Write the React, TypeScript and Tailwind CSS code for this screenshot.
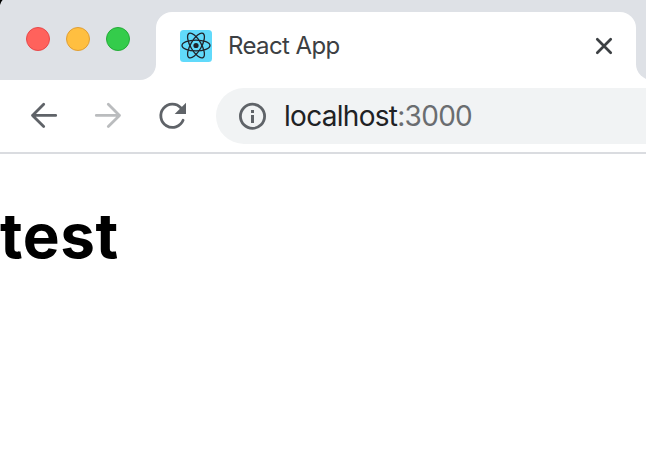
import React from "react";

function TrafficLights() {
  return (
    <div className="flex gap-4 pl-[26px] pt-[27px]">
      <span className="size-6 rounded-full border border-[#e8484a] bg-[#ff625c]" />
      <span className="size-6 rounded-full border border-[#e09e34] bg-[#ffbf40]" />
      <span className="size-6 rounded-full border border-[#24ab38] bg-[#34cc4b]" />
    </div>
  );
}

function ReactLogo() {
  return (
    <svg className="size-8 shrink-0" viewBox="0 0 32 32" fill="none" stroke="#20232a" strokeWidth="1.3">
      <rect width="32" height="32" rx="3.5" fill="#61dafb" stroke="none" />
      <circle cx="16" cy="15.5" r="2.6" fill="#20232a" stroke="none" />
      <ellipse cx="16" cy="15.5" rx="14" ry="5.4" />
      <ellipse cx="16" cy="15.5" rx="14" ry="5.4" transform="rotate(60 16 15.5)" />
      <ellipse cx="16" cy="15.5" rx="14" ry="5.4" transform="rotate(120 16 15.5)" />
    </svg>
  );
}

function TabStrip() {
  return (
    <header className="flex h-20 overflow-hidden bg-white">
      <div className="w-[156px] shrink-0 rounded-br-2xl bg-[#dee1e6]">
        <TrafficLights />
      </div>
      <div className="w-[480px] shrink-0 bg-[#dee1e6] pt-3">
        <div className="flex h-[68px] items-center rounded-t-2xl bg-white pl-6 pr-[23px]">
          <ReactLogo />
          <span className="ml-4 flex-1 whitespace-nowrap text-2xl tracking-[-0.6px] text-[#3c4043]">React App</span>
          <svg className="size-[18px]" viewBox="0 0 18 18" stroke="#3c4043" strokeWidth="2.7" strokeLinecap="round">
            <path d="M2.3 2.3 15.7 15.7M15.7 2.3 2.3 15.7" />
          </svg>
        </div>
      </div>
      <div className="w-10 shrink-0 rounded-bl-2xl bg-[#dee1e6]" />
    </header>
  );
}

function Toolbar() {
  return (
    <div className="flex h-[74px] items-start overflow-hidden border-b-2 border-[#dadce0] bg-white pt-2">
      <svg className="ml-[30px] mt-[14px] h-7 w-7 shrink-0" viewBox="0 0 28 28" fill="none" stroke="#5f6368" strokeWidth="2.8" strokeLinecap="round" strokeLinejoin="round">
        <path d="M25.7 13.4H2.5M13.7 2.2 2.5 13.4l11.2 11.2" />
      </svg>
      <svg className="ml-9 mt-[14px] h-7 w-7 shrink-0" viewBox="0 0 28 28" fill="none" stroke="#babcbe" strokeWidth="2.8" strokeLinecap="round" strokeLinejoin="round">
        <path d="M2.3 13.4h23.2M14.3 2.2l11.2 11.2-11.2 11.2" />
      </svg>
      <svg className="ml-9 mt-[14px] h-7 w-7 shrink-0" viewBox="0 0 28 28" fill="none">
        <path d="M23 6A11.6 11.6 0 1 0 25.1 18.3" stroke="#5f6368" strokeWidth="2.8" strokeLinecap="round" />
        <path d="M28 .8v11.3H16.7Z" fill="#5f6368" />
      </svg>
      <div className="ml-[30px] flex h-14 w-[500px] shrink-0 items-center rounded-l-full bg-[#f1f3f4] pl-[22px]">
        <svg className="size-7" viewBox="0 0 28 28" fill="none">
          <circle cx="14.5" cy="14.3" r="12.1" stroke="#5f6368" strokeWidth="2.8" />
          <path d="M13 8h3v3h-3zM13 13h3v8h-3z" fill="#5f6368" />
        </svg>
        <span className="ml-[18px] whitespace-nowrap text-[28px] tracking-[-0.71px] text-[#202124]">
          localhost<span className="text-[#6a6d70]">:3000</span>
        </span>
      </div>
    </div>
  );
}

export default function App() {
  return (
    <div className="relative h-[466px] w-[646px] overflow-hidden bg-white font-['Inter','Liberation_Sans',sans-serif]">
      <TabStrip />
      <Toolbar />
      <main className="pt-[44px]">
        <h1 className="text-[62px] font-bold leading-[76px] tracking-[0.6px] text-black">test</h1>
      </main>
      <svg className="absolute left-0 top-0 size-2" viewBox="0 0 8 8">
        <path d="M0 0h2.6Q.8 1.8 0 5Z" fill="#000" />
      </svg>
    </div>
  );
}
